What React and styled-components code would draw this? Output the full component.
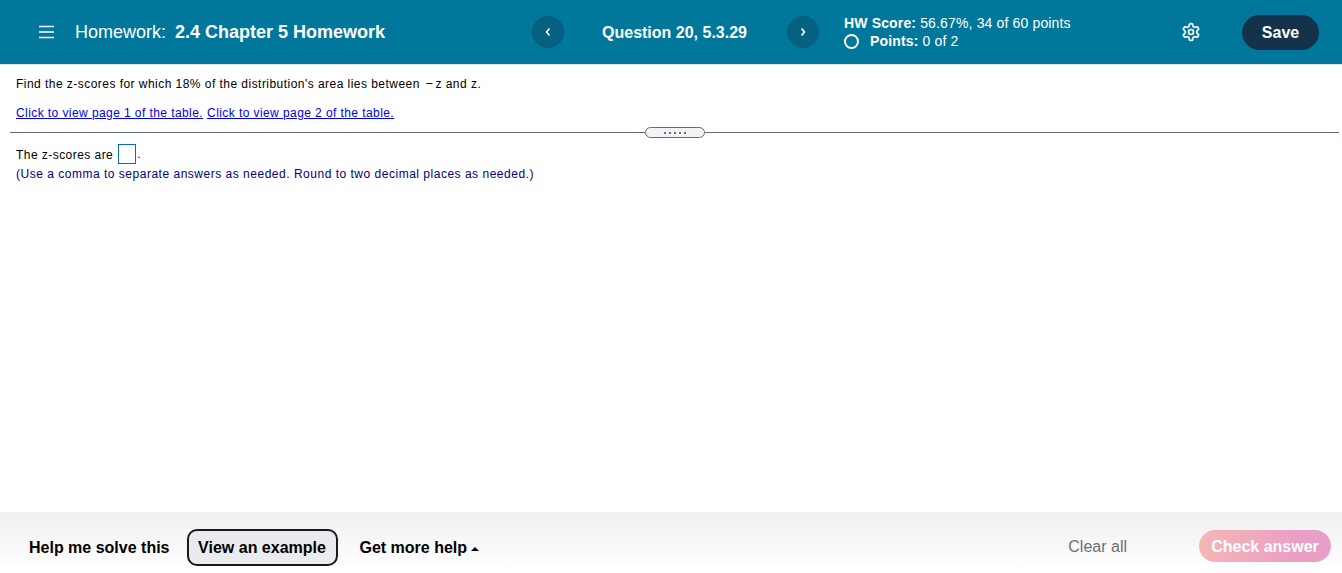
import React from 'react';
import styled, { createGlobalStyle } from 'styled-components';

const Global = createGlobalStyle`
  html, body { margin: 0; padding: 0; background: #fff; }
  body { font-family: "Liberation Sans", Arial, sans-serif; }
`;
const Page = styled.div`
  width: 1342px; height: 573px; display: flex; flex-direction: column; overflow: hidden;
`;
const Header = styled.header`
  height: 64px; flex: none; background: #00779b; border-bottom: 1px solid #dfe3e6; color: #fff;
  display: flex; align-items: center; padding-left: 39px;
`;
const Menu = styled.svg`
  width: 15px; height: 14px; flex: none; margin-right: 21px;
`;
const Title = styled.div`
  width: 457px; flex: none; font-size: 18px; white-space: nowrap;
  b { font-weight: 700; margin-left: 4px; }
`;
const Round = styled.button`
  width: 32px; height: 32px; flex: none; border: 0; border-radius: 50%; padding: 0;
  background: #05617f; color: #fff; display: flex; align-items: center; justify-content: center;
`;
const Question = styled.div`
  width: 221px; padding: 2px 2px 0 0; flex: none; text-align: center; font-size: 16px; font-weight: 700; white-space: nowrap;
`;
const Score = styled.div`
  width: 337px; flex: none; margin-left: 25px; font-size: 14px; line-height: 18px; letter-spacing: 0.15px; white-space: nowrap;
  b { font-weight: 700; }
`;
const PointsRow = styled.div`
  display: flex; align-items: center; gap: 11px;
`;
const Ring = styled.span`
  width: 15px; height: 15px; box-sizing: border-box; border: 2px solid #fff; border-radius: 50%; flex: none;
`;
const Gear = styled.svg`
  width: 20px; height: 20px; flex: none; margin-right: 41px;
`;
const Save = styled.button`
  width: 77px; height: 35px; flex: none; border: 0; border-radius: 18px; background: #14334a; color: #fff;
  font: 700 16px "Liberation Sans", Arial, sans-serif; padding: 2px 0 0;
`;
const Main = styled.main`
  flex: 1; min-height: 0; padding-top: 11px; font-size: 12px; letter-spacing: 0.5px; color: #000;
`;
const Para = styled.p`
  margin: 0 0 0 16px; line-height: 16px; height: ${p => p.$h}px; white-space: nowrap; letter-spacing: ${p => p.$ls}px;
`;
const Minus = styled.span`
  margin: 0 2px 0 -2px; font-size: 13px;
`;
const TableLink = styled.a`
  color: #0000ee; text-decoration: underline; margin-right: 4px; letter-spacing: 0.42px;
`;
const Divider = styled.div`
  display: flex; align-items: center; margin: 0 3px 0 10px; height: 11px;
`;
const Rule = styled.span`
  flex: 1; height: 1px; background: #5f6d7d;
`;
const Handle = styled.span`
  width: 60px; height: 11px; box-sizing: border-box; border: 1px solid #5f6d7d; border-radius: 6px;
  background: #f1f3f5; display: flex; align-items: center; justify-content: center; gap: 3px; flex: none;
`;
const Dot = styled.i`
  width: 2px; height: 2px; background: #5f6d7d; display: block;
`;
const AnswerLine = styled.div`
  display: flex; align-items: center; margin: 6px 0 0 16px; height: 20px; letter-spacing: 0.45px;
`;
const AnswerText = styled.span`
  padding-top: 2px;
`;
const AnswerBox = styled.span`
  width: 16px; height: 18px; border: 1px solid #00779b; margin-left: 5px; margin-right: 1px; flex: none;
`;
const Hint = styled.p`
  margin: 2px 0 0 16px; line-height: 16px; color: #000080; white-space: nowrap; letter-spacing: 0.51px;
`;
const Footer = styled.footer`
  height: 61px; box-sizing: border-box; flex: none; display: flex; align-items: center;
  background: linear-gradient(#f0f0f0, #ffffff); padding: 10px 11px 0 29px;
`;
const HelpText = styled.span`
  font-size: 16px; font-weight: 700; color: #000; white-space: nowrap;
`;
const Example = styled.button`
  width: 151px; height: 37px; box-sizing: border-box; margin: 0 22px 0 17px; padding: 0; flex: none;
  border: 2px solid #1a1a1a; border-radius: 10px; background: #e9ebee; color: #000;
  font: 700 16px "Liberation Sans", Arial, sans-serif;
`;
const Caret = styled.span`
  display: inline-block; width: 0; height: 0; margin-left: 4px; vertical-align: 2px;
  border-left: 4px solid transparent; border-right: 4px solid transparent; border-bottom: 4px solid #000;
`;
const ClearAll = styled.span`
  margin: 0 72px 1px auto; font-size: 16px; color: #6b7075;
`;
const Check = styled.button`
  width: 132px; height: 32px; flex: none; border: 0; border-radius: 16px; padding: 2px 0 0; margin-bottom: 3px; color: #fff;
  background: linear-gradient(100deg, #f4b8b4, #eb9fc4 70%, #e6a0c8);
  font: 700 16px "Liberation Sans", Arial, sans-serif;
`;

export default function App() {
  return (
    <Page>
      <Global />
      <Header>
        <Menu viewBox="0 0 15 14" fill="none" stroke="#fff" strokeWidth="1.5">
          <path d="M0 1.5h15M0 7h15M0 12.5h15" />
        </Menu>
        <Title>Homework: <b>2.4 Chapter 5 Homework</b></Title>
        <Round aria-label="Previous">
          <svg width="8" height="10" viewBox="0 0 8 10" fill="none" stroke="#fff" strokeWidth="1.6"><path d="M5.5 1.5 2.5 5l3 3.5" /></svg>
        </Round>
        <Question>Question 20, 5.3.29</Question>
        <Round aria-label="Next">
          <svg width="8" height="10" viewBox="0 0 8 10" fill="none" stroke="#fff" strokeWidth="1.6"><path d="M2.5 1.5 5.5 5l-3 3.5" /></svg>
        </Round>
        <Score>
          <div><b>HW Score:</b> 56.67%, 34 of 60 points</div>
          <PointsRow><Ring /><span><b>Points:</b> 0 of 2</span></PointsRow>
        </Score>
        <Gear viewBox="0 0 24 24" fill="none" stroke="#fff" strokeWidth="2" strokeLinecap="round" strokeLinejoin="round">
          <path d="M12.22 2h-.44a2 2 0 0 0-2 2v.18a2 2 0 0 1-1 1.73l-.43.25a2 2 0 0 1-2 0l-.15-.08a2 2 0 0 0-2.73.73l-.22.38a2 2 0 0 0 .73 2.73l.15.1a2 2 0 0 1 1 1.72v.51a2 2 0 0 1-1 1.74l-.15.09a2 2 0 0 0-.73 2.73l.22.38a2 2 0 0 0 2.73.73l.15-.08a2 2 0 0 1 2 0l.43.25a2 2 0 0 1 1 1.73V20a2 2 0 0 0 2 2h.44a2 2 0 0 0 2-2v-.18a2 2 0 0 1 1-1.73l.43-.25a2 2 0 0 1 2 0l.15.08a2 2 0 0 0 2.73-.73l.22-.39a2 2 0 0 0-.73-2.73l-.15-.08a2 2 0 0 1-1-1.74v-.5a2 2 0 0 1 1-1.74l.15-.09a2 2 0 0 0 .73-2.73l-.22-.38a2 2 0 0 0-2.73-.73l-.15.08a2 2 0 0 1-2 0l-.43-.25a2 2 0 0 1-1-1.73V4a2 2 0 0 0-2-2z" />
          <circle cx="12" cy="12" r="3" />
        </Gear>
        <Save>Save</Save>
      </Header>
      <Main>
        <Para $h={29} $ls={0.46}>Find the z-scores for which 18% of the distribution's area lies between &nbsp;<Minus>&minus;</Minus>z and z.</Para>
        <Para $h={22} $ls={0.42}>
          <TableLink href="#">Click to view page 1 of the table.</TableLink>
          <TableLink href="#">Click to view page 2 of the table.</TableLink>
        </Para>
        <Divider>
          <Rule />
          <Handle>{[0, 1, 2, 3, 4].map(i => <Dot key={i} />)}</Handle>
          <Rule />
        </Divider>
        <AnswerLine><AnswerText>The z-scores are</AnswerText><AnswerBox />.</AnswerLine>
        <Hint>(Use a comma to separate answers as needed. Round to two decimal places as needed.)</Hint>
      </Main>
      <Footer>
        <HelpText>Help me solve this</HelpText>
        <Example>View an example</Example>
        <HelpText>Get more help<Caret /></HelpText>
        <ClearAll>Clear all</ClearAll>
        <Check>Check answer</Check>
      </Footer>
    </Page>
  );
}
